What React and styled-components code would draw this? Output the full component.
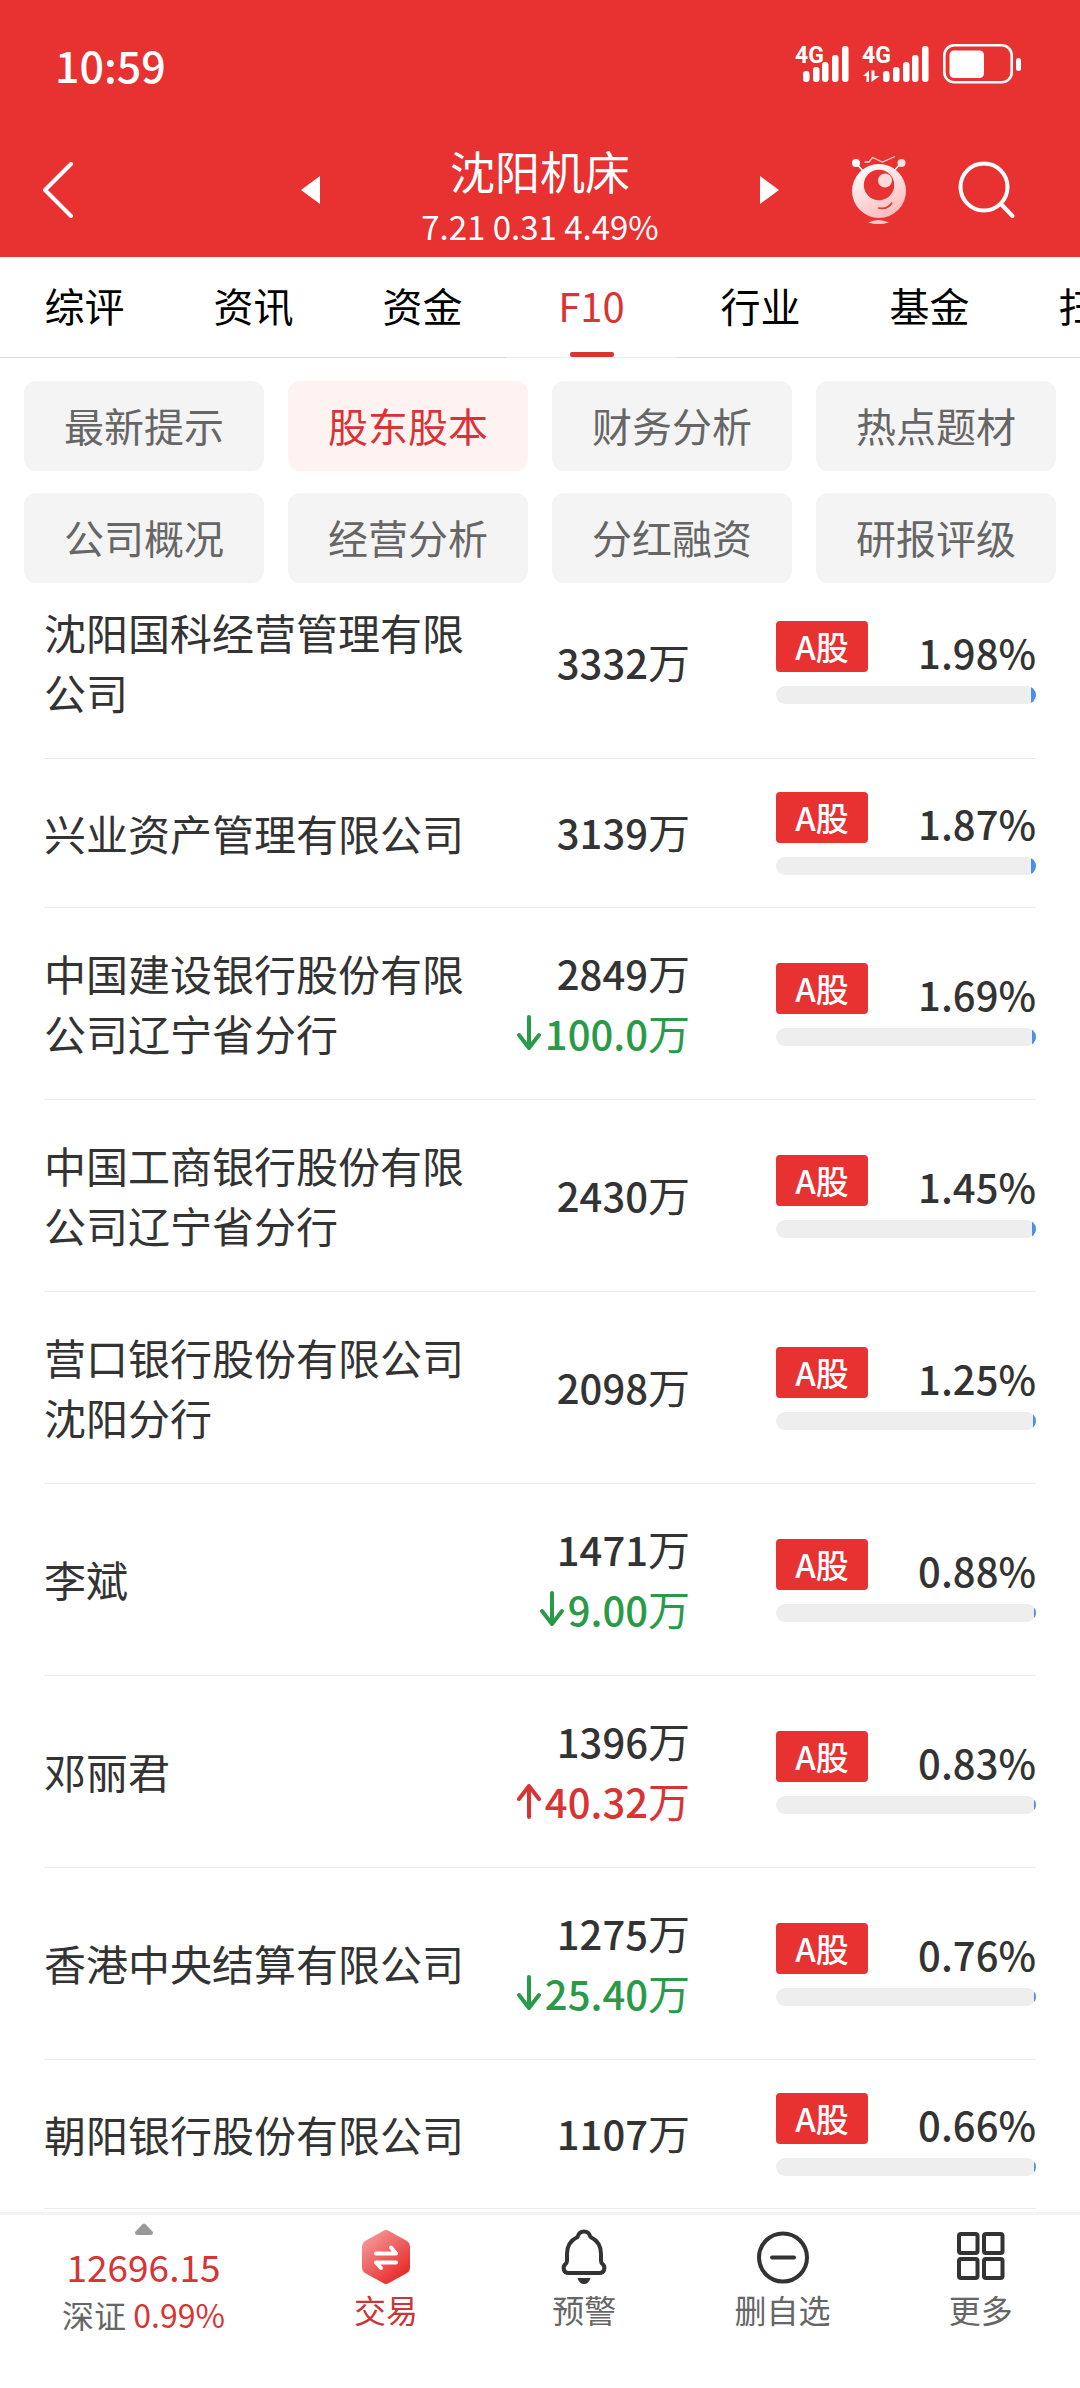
import React from "react";
import styled, { createGlobalStyle } from "styled-components";

const RED = "#e83131";
const TEXT_RED = "#d93434";
const GREEN = "#2a9a48";

const GlobalStyle = createGlobalStyle`
  * { box-sizing: border-box; }
  body {
    margin: 0;
    background: #fff;
    color: #333;
    font-family: "Noto Sans CJK SC", sans-serif;
  }
  button { font-family: inherit; border: 0; padding: 0; margin: 0; background: none; }
  svg { display: block; }
`;

const Page = styled.div`
  min-height: 100vh;
  display: flex;
  flex-direction: column;
  overflow: hidden;
`;

/* ---------- header ---------- */
const Header = styled.header`
  background: ${RED};
  color: #fff;
`;

const StatusBar = styled.div`
  height: 124px;
  padding: 3px 58px 0 55px;
  display: flex;
  align-items: center;
  justify-content: space-between;
`;

const Clock = styled.time`
  font-size: 43px;
  line-height: 60px;
  font-weight: 500;
`;

const TitleBar = styled.div`
  height: 133px;
  padding: 0 43px 2px;
  display: grid;
  grid-template-columns: 1fr 478px 1fr;
  align-items: center;
`;

const Stepper = styled.div`
  display: flex;
  align-items: center;
  justify-content: space-between;
`;

const StockTitle = styled.div`
  padding-top: 19px;
  text-align: center;
`;

const StockName = styled.h1`
  margin: 0;
  font-size: 45px;
  line-height: 54px;
  font-weight: 400;
`;

const StockQuote = styled.p`
  margin: 0;
  font-size: 33px;
  line-height: 56px;
`;

const IconButton = styled.button`
  color: #fff;
  display: block;
`;

const Tools = styled.div`
  display: flex;
  align-items: center;
  justify-content: flex-end;
  gap: 52px;
  padding-right: 21px;
`;

/* ---------- tabs ---------- */
const Tabs = styled.nav`
  display: flex;
  overflow: hidden;
`;

const Tab = styled.button`
  flex: none;
  width: 169px;
  height: 101px;
  font-size: 40px;
  line-height: 60px;
  color: ${(p) => (p.$active ? TEXT_RED : "#000")};
  border-bottom: 1px solid ${(p) => (p.$active ? "#eee" : "#dcdcdc")};
  display: flex;
  flex-direction: column;
  align-items: center;
  padding-top: 18px;
  justify-content: space-between;

  &::after {
    content: "";
    width: 44px;
    height: 5px;
    border-radius: 2px;
    background: ${(p) => (p.$active ? TEXT_RED : "transparent")};
  }
`;

/* ---------- section filters ---------- */
const Sections = styled.nav`
  display: grid;
  grid-template-columns: repeat(4, 1fr);
  gap: 22px 24px;
  padding: 23px 24px 19px;
`;

const SectionButton = styled.button`
  height: 90px;
  padding-bottom: 2px;
  border-radius: 12px;
  font-size: 40px;
  line-height: 60px;
  background: ${(p) => (p.$active ? "#fff3f2" : "#f4f4f4")};
  color: ${(p) => (p.$active ? TEXT_RED : "#666")};
`;

/* ---------- holders ---------- */
const Content = styled.main`
  padding: 0 44px;
  flex: 1;
`;

const HolderTable = styled.table`
  width: 100%;
  table-layout: fixed;
  border-collapse: separate;
  border-spacing: 0;
`;

const NameCol = styled.col``;
const AmountCol = styled.col`
  width: 216px;
`;
const ShareCol = styled.col`
  width: 346px;
`;

const NameCell = styled.th`
  padding: 35px 10px 36px 0;
  border-bottom: 1px solid #ececec;
  text-align: left;
  font-size: 42px;
  line-height: 60px;
  font-weight: 400;
`;

const AmountCell = styled.td`
  padding: ${(p) => (p.$tall ? "35px 0 36px" : "0 0 2px")};
  border-bottom: 1px solid #ececec;
  text-align: right;
  font-size: 40px;
  line-height: 60px;
  font-weight: 500;
  white-space: nowrap;
`;

const ShareCell = styled.td`
  padding: 33px 0 32px 86px;
  border-bottom: 1px solid #ececec;
`;

const HolderRow = styled.tr`
  &:first-child > * {
    padding-top: 0;
    padding-bottom: 36px;
  }
`;

const Unit = styled.span`
  font-size: 42px;
  line-height: 42px;
  font-weight: 400;
`;

const Change = styled.div`
  display: flex;
  align-items: center;
  justify-content: flex-end;
  gap: 4px;
  color: ${(p) => (p.$up ? TEXT_RED : GREEN)};
`;

const ShareTop = styled.div`
  display: flex;
  align-items: flex-end;
  justify-content: space-between;
  margin-bottom: 14px;
`;

const Badge = styled.span`
  width: 92px;
  height: 51px;
  border-radius: 4px;
  background: ${RED};
  color: #fff;
  font-size: 33px;
  line-height: 50px;
  text-align: center;
  font-weight: 500;
`;

const Percent = styled.span`
  font-size: 40px;
  line-height: 40px;
  font-weight: 500;
`;

const Track = styled.div`
  height: 18px;
  border-radius: 9px;
  overflow: hidden;
  background: #eee;
  display: flex;
  justify-content: flex-end;
`;

const Fill = styled.div`
  background: #4a8fe8;
`;

/* ---------- bottom bar ---------- */
const BottomBar = styled.footer`
  height: 176px;
  margin-top: 3px;
  border-top: 3px solid #f3f3f3;
  display: grid;
  grid-template-columns: 287px repeat(4, 1fr);
  align-items: start;
`;

const IndexButton = styled.button`
  display: flex;
  flex-direction: column;
  align-items: center;
  padding-top: 8px;
  color: ${TEXT_RED};
`;

const IndexValue = styled.span`
  margin-top: 7px;
  font-size: 37px;
  line-height: 48px;
`;

const IndexName = styled.span`
  font-size: 32px;
  line-height: 48px;
`;

const Muted = styled.span`
  color: #666;
`;

const Action = styled.button`
  display: flex;
  flex-direction: column;
  align-items: center;
  padding-top: 14px;
  font-size: 32px;
  line-height: 48px;
  color: ${(p) => (p.$active ? "#cc3535" : "#666")};
`;

/* ---------- drawings ---------- */
const StatusIcons = () => (
  <svg width="227" height="42" viewBox="795 43 227 42" fill="#fff" role="img" aria-label="4G">
    {[795, 862].map((x) => (
      <text key={x} x={x} y="63" fontSize="23" fontWeight="700" fontFamily='"Liberation Sans Narrow", Roboto, sans-serif'>
        4G
      </text>
    ))}
    {[[803, 71], [813, 67], [822, 62], [832, 55], [842, 46], [883, 71], [893, 67], [903, 62], [912, 55], [922, 46]].map(([x, y]) => (
      <rect key={x} x={x} y={y} width="6.5" height={82 - y} rx="3" />
    ))}
    <path d="M863 76L869 70.500V82H866.500V76ZM871.500 70.500H874.500V76H879.500L871.500 82Z" />
    <rect x="944.300" y="45.300" width="67.400" height="37" rx="10" fill="none" stroke="#fff" strokeWidth="2.600" />
    <rect x="949.500" y="50.500" width="34.500" height="27.500" rx="4.500" />
    <rect x="1016" y="58" width="5" height="13" rx="2.500" />
  </svg>
);

const BackIcon = () => (
  <svg width="30" height="56" viewBox="0 0 30 56" fill="none" stroke="#fff" strokeWidth="4" strokeLinecap="round" strokeLinejoin="round">
    <path d="M28 2L2 28L28 54" />
  </svg>
);

const TriangleIcon = ({ d }) => (
  <svg width="19" height="28" viewBox="0 0 19 28" fill="#fff">
    <path d={d} />
  </svg>
);

const RobotIcon = () => (
  <svg width="54" height="70" viewBox="0 0 54 70">
    <defs>
      <linearGradient id="robot" x1="0.200" y1="0" x2="0.700" y2="1">
        <stop offset="0" stopColor="#fff" />
        <stop offset="1" stopColor="#fdb9b9" />
      </linearGradient>
    </defs>
    <path d="M4 8L11 16M49 8L42 16" stroke="#fff" strokeWidth="1.600" />
    <circle cx="4" cy="8" r="4" fill="#fff" />
    <circle cx="49.500" cy="8" r="4" fill="#ffe1e1" />
    <path d="M12.500 7H17L20.500 2.500L30.500 7L43 1.500" fill="none" stroke="#ffd0d0" strokeWidth="1.300" />
    <circle cx="27" cy="36" r="27" fill="url(#robot)" />
    <circle cx="27" cy="30" r="15.200" fill={RED} />
    <circle cx="33" cy="25.500" r="7" fill="#ffdada" />
    <path d="M26 53Q36 55 40 47.500" fill="none" stroke="#dc3c3c" strokeWidth="1.600" />
    <path d="M16 67.500Q26.500 62.500 37 67.500Q26.500 70.500 16 67.500Z" fill="#ffcaca" />
  </svg>
);

const SearchIcon = () => (
  <svg width="58" height="58" viewBox="0 0 58 58" fill="none" stroke="#fff" strokeWidth="4" strokeLinecap="round">
    <circle cx="26" cy="26" r="23.500" />
    <path d="M43 43L54.500 55" />
  </svg>
);

const ArrowIcon = ({ up }) => (
  <svg width="24" height="36" viewBox="0 0 24 36" fill="none" stroke="currentColor" strokeWidth="4" strokeLinecap="round" strokeLinejoin="round">
    <path d={up ? "M12 34V3M2 16L12 3L22 16" : "M12 2V33M2 20L12 33L22 20"} />
  </svg>
);

const CaretIcon = () => (
  <svg width="20" height="12" viewBox="0 0 20 12" fill="#999">
    <path d="M8.500 1.200Q10 0 11.500 1.200L18.500 8.500Q20 11.500 17 12H3Q0 11.500 1.500 8.500Z" />
  </svg>
);

const TradeIcon = () => (
  <svg width="54" height="56" viewBox="0 0 54 56">
    <defs>
      <linearGradient id="trade" x1="0.150" y1="0.050" x2="0.800" y2="0.900">
        <stop offset="0" stopColor="#f39a9a" />
        <stop offset="1" stopColor="#e92a2a" />
      </linearGradient>
    </defs>
    <path d="M24 2Q27 0 30 2L48 12Q51 14 51 17V39Q51 42 48 44L30 54Q27 56 24 54L6 44Q3 42 3 39V17Q3 14 6 12Z" fill="url(#trade)" />
    <g fill="none" stroke="#fff" strokeWidth="4" strokeLinecap="round" strokeLinejoin="round">
      <path d="M17 24.500H37L32 18.500" />
      <path d="M37 33.500H17L22 39" />
    </g>
  </svg>
);

const BellIcon = () => (
  <svg width="54" height="56" viewBox="0 0 54 56">
    <path
      d="M20.500 8Q22 2.500 27 2.500Q32 2.500 33.500 8Q44 13 44 25V32Q44 34 46 35.500Q48 37.500 47 41Q46 44 42.500 44H11.500Q8 44 7 41Q6 37.500 8 35.500Q10 34 10 32V25Q10 13 20.500 8Z"
      fill="none"
      stroke="#333"
      strokeWidth="4"
      strokeLinejoin="round"
    />
    <path d="M20.500 49H33.500Q31.500 55 27 55Q22.500 55 20.500 49Z" fill="#333" />
  </svg>
);

const RemoveIcon = () => (
  <svg width="54" height="56" viewBox="0 0 54 56" fill="none" stroke="#333" strokeWidth="4" strokeLinecap="round">
    <circle cx="27" cy="28.500" r="24" />
    <path d="M16 28.500H38" />
  </svg>
);

const MoreIcon = () => (
  <svg width="54" height="56" viewBox="0 0 54 56" fill="none" stroke="#333" strokeWidth="4">
    <rect x="5" y="5" width="18.500" height="19" rx="2" />
    <rect x="30" y="5" width="18.500" height="19" rx="2" />
    <rect x="5" y="30" width="18.500" height="19" rx="2" />
    <rect x="30" y="30" width="18.500" height="19" rx="2" />
  </svg>
);

/* ---------- data ---------- */
const tabs = ["综评", "资讯", "资金", "F10", "行业", "基金", "扫雷"];
const sections = ["最新提示", "股东股本", "财务分析", "热点题材", "公司概况", "经营分析", "分红融资", "研报评级"];
const holders = [
  { name: "沈阳国科经营管理有限公司", amount: "3332", percent: 1.98 },
  { name: "兴业资产管理有限公司", amount: "3139", percent: 1.87 },
  { name: "中国建设银行股份有限公司辽宁省分行", amount: "2849", percent: 1.69, change: "100.0" },
  { name: "中国工商银行股份有限公司辽宁省分行", amount: "2430", percent: 1.45 },
  { name: "营口银行股份有限公司沈阳分行", amount: "2098", percent: 1.25 },
  { name: "李斌", amount: "1471", percent: 0.88, change: "9.00" },
  { name: "邓丽君", amount: "1396", percent: 0.83, change: "40.32", up: true },
  { name: "香港中央结算有限公司", amount: "1275", percent: 0.76, change: "25.40" },
  { name: "朝阳银行股份有限公司", amount: "1107", percent: 0.66 },
];
const actions = [
  { label: "交易", Icon: TradeIcon, active: true },
  { label: "预警", Icon: BellIcon },
  { label: "删自选", Icon: RemoveIcon },
  { label: "更多", Icon: MoreIcon },
];

const Holder = ({ name, amount, percent, change, up }) => (
  <HolderRow>
    <NameCell scope="row">{name}</NameCell>
    <AmountCell $tall={Boolean(change)}>
      <div>
        {amount}
        <Unit>万</Unit>
      </div>
      {change && (
        <Change $up={up}>
          <ArrowIcon up={up} />
          <span>
            {change}
            <Unit>万</Unit>
          </span>
        </Change>
      )}
    </AmountCell>
    <ShareCell>
      <ShareTop>
        <Badge>A股</Badge>
        <Percent>{percent.toFixed(2)}%</Percent>
      </ShareTop>
      <Track>
        <Fill style={{ width: `${percent}%` }} />
      </Track>
    </ShareCell>
  </HolderRow>
);

export default function App() {
  return (
    <Page>
      <GlobalStyle />
      <Header>
        <StatusBar>
          <Clock>10:59</Clock>
          <StatusIcons />
        </StatusBar>
        <TitleBar>
          <IconButton aria-label="返回">
            <BackIcon />
          </IconButton>
          <Stepper>
            <IconButton aria-label="上一只">
              <TriangleIcon d="M0 14L19 0V28Z" />
            </IconButton>
            <StockTitle>
              <StockName>沈阳机床</StockName>
              <StockQuote>7.21 0.31 4.49%</StockQuote>
            </StockTitle>
            <IconButton aria-label="下一只">
              <TriangleIcon d="M19 14L0 0V28Z" />
            </IconButton>
          </Stepper>
          <Tools>
            <IconButton aria-label="助手">
              <RobotIcon />
            </IconButton>
            <IconButton aria-label="搜索">
              <SearchIcon />
            </IconButton>
          </Tools>
        </TitleBar>
      </Header>
      <Tabs>
        {tabs.map((t) => (
          <Tab key={t} $active={t === "F10"}>
            {t}
          </Tab>
        ))}
      </Tabs>
      <Sections>
        {sections.map((s) => (
          <SectionButton key={s} $active={s === "股东股本"}>
            {s}
          </SectionButton>
        ))}
      </Sections>
      <Content>
        <HolderTable>
          <colgroup>
            <NameCol />
            <AmountCol />
            <ShareCol />
          </colgroup>
          <tbody>
            {holders.map((h) => (
              <Holder key={h.name} {...h} />
            ))}
          </tbody>
        </HolderTable>
      </Content>
      <BottomBar>
        <IndexButton>
          <CaretIcon />
          <IndexValue>12696.15</IndexValue>
          <IndexName>
            <Muted>深证</Muted> 0.99%
          </IndexName>
        </IndexButton>
        {actions.map(({ label, Icon, active }) => (
          <Action key={label} $active={active}>
            <Icon />
            {label}
          </Action>
        ))}
      </BottomBar>
    </Page>
  );
}
